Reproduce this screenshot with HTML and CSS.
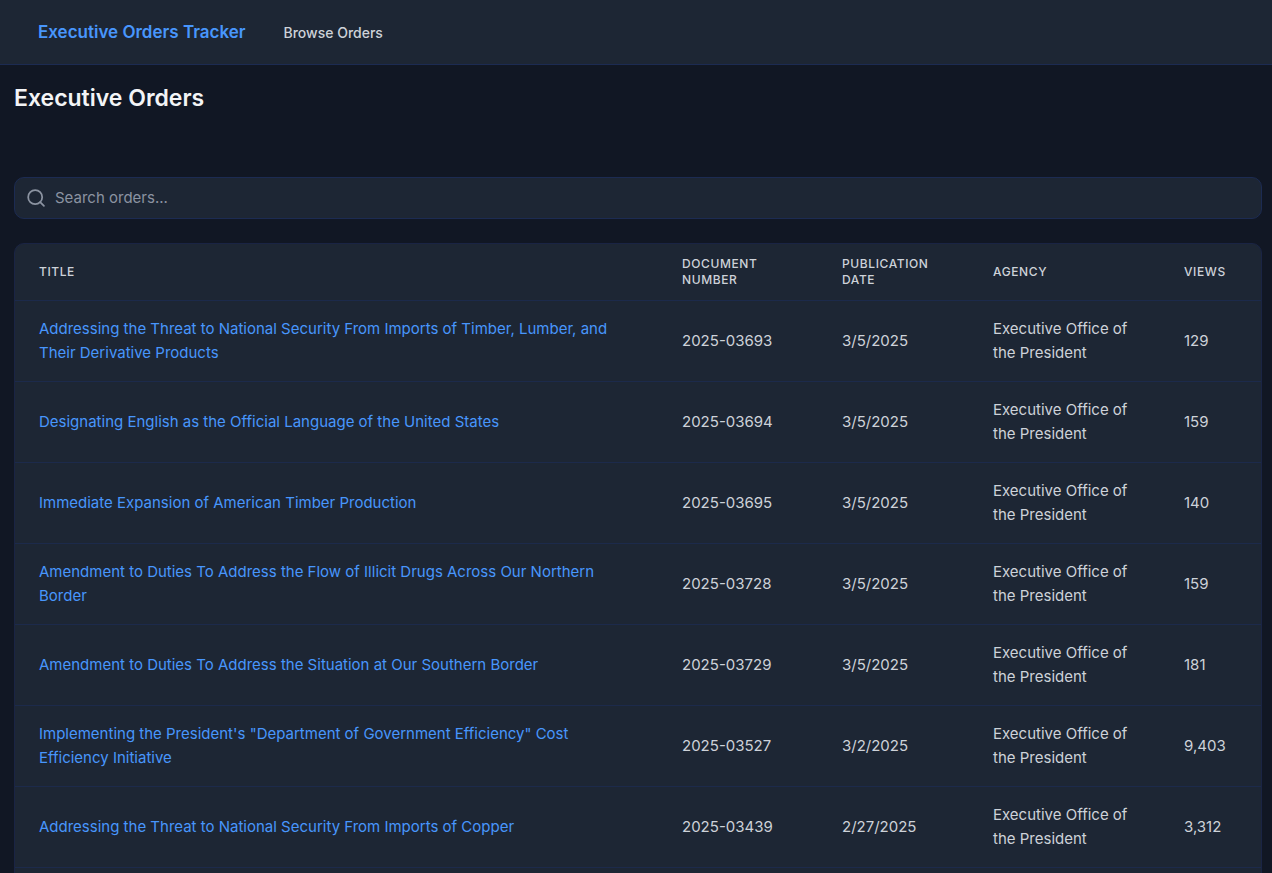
FILE: index.html
```html
<!DOCTYPE html>
<html lang="en">
<head>
  <meta charset="UTF-8" />
  <meta name="viewport" content="width=device-width, initial-scale=1" />
  <title>Executive Orders Tracker</title>
  <link rel="stylesheet" href="styles.css">
</head>
<body>

  <nav class="navbar">
    <a href="#" class="brand">Executive Orders Tracker</a>
    <a href="#" class="nav-link">Browse Orders</a>
  </nav>

  <main class="content">
    <h1>Executive Orders</h1>

    <form class="search" role="search">
      <svg class="search-icon" viewBox="0 0 24 24" fill="none" stroke="currentColor" stroke-width="2" stroke-linecap="round" stroke-linejoin="round" aria-hidden="true">
        <circle cx="10.5" cy="10.5" r="8"></circle>
        <path d="M20.5 20.5 16.2 16.2"></path>
      </svg>
      <input type="text" class="search-input" placeholder="Search orders..." aria-label="Search orders" />
    </form>

    <div class="table-card">
      <table>
        <colgroup>
          <col>
          <col class="col-number">
          <col class="col-date">
          <col class="col-agency">
          <col class="col-views">
        </colgroup>
        <thead>
          <tr>
            <th>Title</th>
            <th>Document Number</th>
            <th>Publication Date</th>
            <th>Agency</th>
            <th>Views</th>
          </tr>
        </thead>
        <tbody>
          <tr>
            <td><a href="#">Addressing the Threat to National Security From Imports of Timber, Lumber, and Their Derivative Products</a></td>
            <td>2025-03693</td>
            <td>3/5/2025</td>
            <td>Executive Office of the President</td>
            <td>129</td>
          </tr>
          <tr>
            <td><a href="#">Designating English as the Official Language of the United States</a></td>
            <td>2025-03694</td>
            <td>3/5/2025</td>
            <td>Executive Office of the President</td>
            <td>159</td>
          </tr>
          <tr>
            <td><a href="#">Immediate Expansion of American Timber Production</a></td>
            <td>2025-03695</td>
            <td>3/5/2025</td>
            <td>Executive Office of the President</td>
            <td>140</td>
          </tr>
          <tr>
            <td><a href="#">Amendment to Duties To Address the Flow of Illicit Drugs Across Our Northern Border</a></td>
            <td>2025-03728</td>
            <td>3/5/2025</td>
            <td>Executive Office of the President</td>
            <td>159</td>
          </tr>
          <tr>
            <td><a href="#">Amendment to Duties To Address the Situation at Our Southern Border</a></td>
            <td>2025-03729</td>
            <td>3/5/2025</td>
            <td>Executive Office of the President</td>
            <td>181</td>
          </tr>
          <tr>
            <td><a href="#">Implementing the President's "Department of Government Efficiency" Cost Efficiency Initiative</a></td>
            <td>2025-03527</td>
            <td>3/2/2025</td>
            <td>Executive Office of the President</td>
            <td>9,403</td>
          </tr>
          <tr>
            <td><a href="#">Addressing the Threat to National Security From Imports of Copper</a></td>
            <td>2025-03439</td>
            <td>2/27/2025</td>
            <td>Executive Office of the President</td>
            <td>3,312</td>
          </tr>
        </tbody>
      </table>
    </div>
  </main>

</body>
</html>
```

FILE: styles.css
```css
* {
  box-sizing: border-box;
}
body {
  font-family: Inter, sans-serif;
  font-size: 15px;
  line-height: 24px;
  background: #111724;
  color: #cdd2d9;
  margin: 0;
  height: 100vh;
  overflow: hidden;
}
a {
  color: #4896fc;
  text-decoration: none;
}
.navbar {
  display: flex;
  align-items: baseline;
  gap: 38px;
  padding: 18px 38px;
  background: #1d2634;
  border-bottom: 1px solid #1c2b52;
}
.brand {
  font-size: 17px;
  line-height: 28px;
  font-weight: 600;
}
.nav-link {
  color: #cdd2d9;
  font-size: 14px;
  line-height: 20px;
  font-weight: 500;
}
.content {
  padding: 17px 10px 24px 14px;
}
h1 {
  margin: 0 0 63px;
  font-size: 23px;
  line-height: 32px;
  font-weight: 600;
  color: #f3f4f6;
}
.search {
  display: flex;
  align-items: center;
  gap: 8px;
  padding: 8px 11px;
  margin-bottom: 24px;
  background: #1d2634;
  border: 1px solid #1c2b52;
  border-radius: 10px;
}
.search-icon {
  width: 21px;
  height: 21px;
  color: #8b93a1;
}
.search-input {
  flex: 1;
  height: 24px;
  padding: 0;
  border: none;
  outline: none;
  background: transparent;
  color: #cdd2d9;
  font: inherit;
}
.search-input::placeholder {
  color: #8b93a1;
}
.table-card {
  padding-bottom: 24px;
  background: #1d2634;
  border: 1px solid #1a2444;
  border-radius: 10px;
}
table {
  width: 100%;
  table-layout: fixed;
  border-collapse: separate;
  border-spacing: 0;
}
.col-number {
  width: 160px;
}
.col-date {
  width: 151px;
}
.col-agency {
  width: 191px;
}
.col-views {
  width: 101px;
}
th, td {
  border-bottom: 1px solid #1c2a4b;
  text-align: left;
}
th {
  padding: 12px 24px;
  font-size: 12px;
  line-height: 16px;
  font-weight: 500;
  letter-spacing: 0.05em;
  text-transform: uppercase;
}
td {
  padding: 16px 24px;
}
```
